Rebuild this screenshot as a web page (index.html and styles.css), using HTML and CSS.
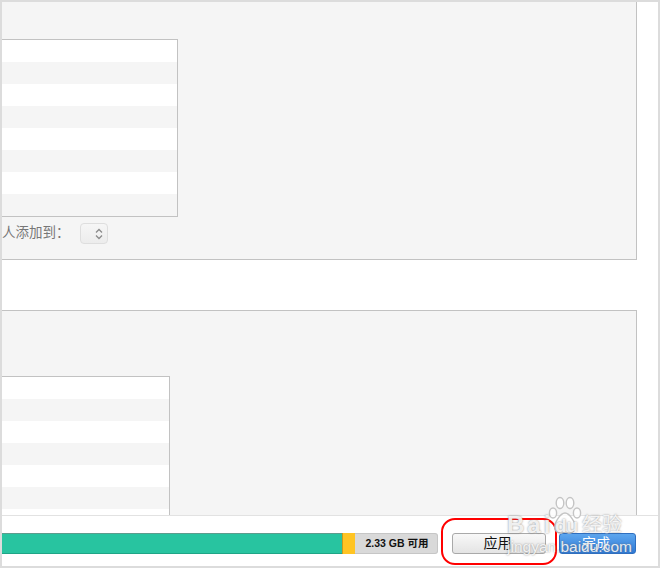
FILE: index.html
```html
<!DOCTYPE html>
<html lang="zh-CN">
<head>
    <meta charset="UTF-8">
    <title>应用</title>
    <link rel="stylesheet" href="styles.css">
</head>
<body>
    <div class="window">
        <div class="content">
            <section class="panel panel-top">
                <div class="list">
                    <div class="row"></div><div class="row"></div><div class="row"></div><div class="row"></div>
                    <div class="row"></div><div class="row"></div><div class="row"></div><div class="row"></div>
                </div>
                <div class="add-to">
                    <span class="add-label">人添加到：</span>
                    <span class="stepper">
                        <svg width="10" height="14" viewBox="0 0 10 14"><path d="M2 5.500 5 2.500 8 5.500M2 8.500 5 11.500 8 8.500" fill="none" stroke="#8a8a8a" stroke-width="1.3"/></svg>
                    </span>
                </div>
            </section>
            <section class="panel panel-bottom">
                <div class="list list-short">
                    <div class="row"></div><div class="row"></div><div class="row"></div><div class="row"></div>
                    <div class="row"></div><div class="row"></div><div class="row"></div>
                </div>
            </section>
        </div>
        <footer class="footer">
            <div class="storage">
                <div class="seg seg-teal"></div>
                <div class="seg seg-yellow"></div>
                <div class="seg seg-free">2.33 GB 可用</div>
            </div>
            <button class="btn btn-apply">应用</button>
            <button class="btn btn-done">完成</button>
        </footer>
    </div>

    <!-- red marker drawn over the screenshot -->
    <div class="marker"></div>

    <!-- watermark -->
    <div class="watermark">
        <svg class="paw" width="34" height="40" viewBox="0 0 34 40">
            <g fill="#fff" fill-opacity=".8" stroke="#c4c4c4" stroke-width="1.4">
                <ellipse cx="5" cy="17" rx="3.600" ry="5"/>
                <ellipse cx="12" cy="7" rx="3.800" ry="5.500"/>
                <ellipse cx="22" cy="7" rx="3.800" ry="5.500"/>
                <ellipse cx="29" cy="17" rx="3.600" ry="5"/>
                <path d="M17 17c-4 0-6 4-8 7-3 4-4 12 3 13 2 .3 3-1 5-1s3 1.300 5 1c7-1 6-9 3-13-2-3-4-7-8-7z"/>
            </g>
        </svg>
        <span class="wm-bai">Bai</span>
        <span class="wm-du">du</span>
        <span class="wm-jy">经验</span>
        <span class="wm-url">jingyan.baidu.com</span>
    </div>
</body>
</html>
```
FILE: styles.css
```css
html, body {
    margin: 0;
    height: 568px;
    overflow: hidden;
    background-color: #ffffff;
    font-family: "Liberation Sans", "Noto Sans CJK SC", sans-serif;
}
.window {
    box-sizing: border-box;
    width: 660px;
    height: 568px;
    border: 2px solid #dcdcdc;
    display: flex;
    flex-direction: column;
}
.content {
    flex: 1;
    display: flex;
    flex-direction: column;
    justify-content: space-between;
    min-height: 0;
}
.panel {
    box-sizing: border-box;
    width: 635px;
    background-color: #f5f5f5;
    border-right: 1px solid #c2c2c2;
}
.panel-top {
    height: 258px;
    padding-top: 37px;
    border-bottom: 1px solid #c2c2c2;
}
.panel-bottom {
    height: 205px;
    padding-top: 65px;
    border-top: 1px solid #c2c2c2;
    overflow: hidden;
}
.list {
    box-sizing: content-box;
    width: 175px;
    background-color: #ffffff;
    border-top: 1px solid #c2c2c2;
    border-right: 1px solid #c2c2c2;
    border-bottom: 1px solid #c2c2c2;
}
.list-short {
    width: 167px;
}
.row {
    height: 22px;
}
.row:nth-child(even) {
    background-color: #f5f5f5;
}
.add-to {
    display: flex;
    align-items: center;
    margin-top: 6px;
}
.add-label {
    width: 78px;
    height: 21px;
    font-family: "Noto Sans CJK TC", sans-serif;
    font-size: 13.5px;
    line-height: 17px;
    color: #777777;
    white-space: nowrap;
}
.stepper {
    box-sizing: border-box;
    width: 28px;
    height: 21px;
    padding-right: 3px;
    display: flex;
    align-items: center;
    justify-content: flex-end;
    border: 1px solid #dedede;
    border-radius: 4px;
    background: linear-gradient(#f6f6f6, #ececec);
}
.footer {
    box-sizing: border-box;
    height: 51px;
    padding: 17px 0 0 0;
    border-top: 1px solid #e2e2e2;
    display: flex;
    align-items: flex-start;
}
.storage {
    width: 436px;
    height: 21px;
    display: flex;
}
.seg {
    box-sizing: border-box;
    height: 21px;
}
.seg-teal {
    width: 340px;
    background-color: #28c4a0;
    border-top: 1px solid #5d9c8e;
    border-bottom: 1px solid #1fa586;
}
.seg-yellow {
    width: 13px;
    background-color: #ffc423;
    border-left: 1px solid #c79a1c;
}
.seg-free {
    width: 83px;
    padding-left: 2px;
    background-color: #d9d9d9;
    border: 1px solid #c6c6c6;
    border-left: none;
    border-radius: 0 3px 3px 0;
    font-size: 10.5px;
    font-weight: bold;
    line-height: 19px;
    text-align: center;
    color: #111111;
}
.btn {
    box-sizing: border-box;
    height: 21px;
    padding: 0 3px 4px 0;
    font-family: "Noto Sans CJK SC", sans-serif;
    font-size: 14px;
    line-height: 16px;
    border-radius: 3px;
}
.btn-apply {
    width: 94px;
    margin-left: 14px;
    color: #111111;
    border: 1px solid #a9a9a9;
    background: linear-gradient(#f8f8f8, #e4e4e4);
}
.btn-done {
    width: 77px;
    margin-left: 13px;
    color: #ffffff;
    border: 1px solid #2f6fc0;
    background: linear-gradient(#5da6ee, #2f7ad6);
}
.marker {
    position: absolute;
    left: 441px;
    top: 518px;
    width: 116px;
    height: 47px;
    box-sizing: border-box;
    border: 2px solid #ff0000;
    border-radius: 14px;
}
.watermark {
    position: absolute;
    left: 0;
    top: 0;
    width: 660px;
    height: 568px;
    overflow: hidden;
    pointer-events: none;
    color: rgba(255, 255, 255, 0.85);
    text-shadow: 0 0 2px rgba(110, 110, 110, 0.8);
}
.watermark span {
    position: absolute;
    white-space: nowrap;
}
.paw {
    position: absolute;
    left: 548px;
    top: 496px;
}
.wm-bai {
    left: 507px;
    top: 511px;
    font-size: 24px;
    font-weight: bold;
    letter-spacing: 3px;
}
.wm-du {
    left: 555px;
    top: 515px;
    font-size: 19px;
    font-weight: bold;
}
.wm-jy {
    left: 582px;
    top: 509px;
    font-family: "Noto Sans CJK SC", sans-serif;
    font-size: 20px;
}
.wm-url {
    left: 507px;
    top: 538px;
    font-size: 15.500px;
}
```
